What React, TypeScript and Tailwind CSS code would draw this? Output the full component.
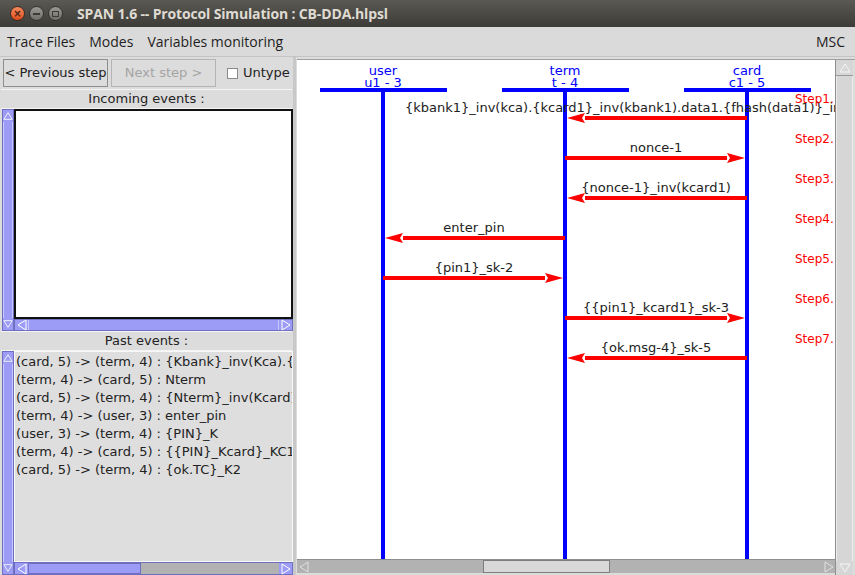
import React from 'react';

const MSGS = [
  { from: 747, to: 565, label: '{kbank1}_inv(kca).{kcard1}_inv(kbank1).data1.{fhash(data1)}_inv(kcard1)', start: 405 },
  { from: 565, to: 747, label: 'nonce-1' },
  { from: 747, to: 565, label: '{nonce-1}_inv(kcard1)' },
  { from: 565, to: 383, label: 'enter_pin' },
  { from: 383, to: 565, label: '{pin1}_sk-2' },
  { from: 565, to: 747, label: '{{pin1}_kcard1}_sk-3' },
  { from: 747, to: 565, label: '{ok.msg-4}_sk-5' },
];

const ACTORS = [
  { x: 383, name: 'user', id: 'u1 - 3' },
  { x: 565, name: 'term', id: 't - 4' },
  { x: 747, name: 'card', id: 'c1 - 5' },
];

const PAST = [
  '(card, 5) -> (term, 4) : {Kbank}_inv(Kca).{Kcard}_inv(Kbank)',
  '(term, 4) -> (card, 5) : Nterm',
  '(card, 5) -> (term, 4) : {Nterm}_inv(Kcard)',
  '(term, 4) -> (user, 3) : enter_pin',
  '(user, 3) -> (term, 4) : {PIN}_K',
  '(term, 4) -> (card, 5) : {{PIN}_Kcard}_KC1',
  '(card, 5) -> (term, 4) : {ok.TC}_K2',
];

// small outlined triangle used on scrollbar buttons
function Arrow({ dir, color = '#ffffff' }: { dir: 'up' | 'down' | 'left' | 'right'; color?: string }) {
  const pts = {
    up: '6,2 11,10 1,10',
    down: '1,2 11,2 6,10',
    left: '2,6 10,1 10,11',
    right: '10,6 2,1 2,11',
  }[dir];
  return (
    <svg width="12" height="12" viewBox="0 0 12 12">
      <polygon points={pts} fill="none" stroke={color} strokeWidth="1" />
    </svg>
  );
}

function PurpleVScroll() {
  return (
    <div className="w-[12px] flex flex-col bg-[#9c9cf6] border border-[#6f6fc0]">
      <div className="h-[12px] flex items-center justify-center"><Arrow dir="up" /></div>
      <div className="flex-1 border-x border-[#c8c8ff]" />
      <div className="h-[12px] flex items-center justify-center"><Arrow dir="down" /></div>
    </div>
  );
}

function MscCanvas() {
  return (
    <svg width="538" height="499" viewBox="297 60 538 499" className="block">
      <rect x="297" y="60" width="538" height="499" fill="#ffffff" />
      {ACTORS.map(a => (
        <g key={a.name}>
          <text x={a.x} y="75" textAnchor="middle" fill="#0000ff" fontSize="13" fontFamily="DejaVu Sans, sans-serif">{a.name}</text>
          <text x={a.x} y="87" textAnchor="middle" fill="#0000ff" fontSize="13" fontFamily="DejaVu Sans, sans-serif">{a.id}</text>
          <rect x={a.x - 63} y="88" width="127" height="4" fill="#0000ff" />
          <rect x={a.x - 2} y="92" width="4" height="470" fill="#0000ff" />
        </g>
      ))}
      {MSGS.map((m, i) => {
        const y = 118 + 40 * i;
        const dirLeft = m.to < m.from;
        const tip = dirLeft ? m.to + 2 : m.to - 2;
        const base = dirLeft ? tip + 18 : tip - 18;
        return (
          <g key={i}>
            <rect x={Math.min(m.from, base)} y={y - 2} width={Math.abs(m.from - base)} height="4" fill="#ff0000" />
            <polygon points={`${tip},${y} ${base},${y - 5} ${base + (dirLeft ? -3 : 3)},${y} ${base},${y + 5}`} fill="#ff0000" />
            {m.start ? (
              <text x={m.start} y={y - 6} fill="#222222" fontSize="13" fontFamily="DejaVu Sans, sans-serif">{m.label}</text>
            ) : (
              <text x={(m.from + m.to) / 2} y={y - 6} textAnchor="middle" fill="#222222" fontSize="13" fontFamily="DejaVu Sans, sans-serif">{m.label}</text>
            )}
            <text x="795" y={103 + 40 * i} fill="#ff0000" fontSize="12" fontFamily="DejaVu Sans, sans-serif">Step{i + 1}.</text>
          </g>
        );
      })}
    </svg>
  );
}

export default function App() {
  return (
    <div className="w-[855px] h-[575px] flex flex-col overflow-hidden bg-[#dcdcdc] font-['DejaVu_Sans',sans-serif]">
      {/* Title bar */}
      <div className="h-[27px] flex items-center bg-gradient-to-b from-[#5a5953] to-[#3c3b37]">
        <div className="flex items-center gap-[4px] ml-[10px]">
          <div className="w-[15px] h-[15px] rounded-full bg-gradient-to-b from-[#f58a5b] to-[#df4b16] border border-[#3a2a22] flex items-center justify-center text-[10px] leading-none font-bold text-[#3c2418]">×</div>
          <div className="w-[15px] h-[15px] rounded-full bg-gradient-to-b from-[#9a9993] to-[#6f6e69] border border-[#333] flex items-center justify-center">
            <div className="w-[7px] h-[2px] bg-[#3c3b37]" />
          </div>
          <div className="w-[15px] h-[15px] rounded-full bg-gradient-to-b from-[#9a9993] to-[#6f6e69] border border-[#333] flex items-center justify-center">
            <div className="w-[7px] h-[6px] border-[1.5px] border-[#3c3b37]" />
          </div>
        </div>
        <div className="ml-[14px] text-[14px] font-bold text-[#dfdbd2] font-['Open_Sans',sans-serif] tracking-[-0.15px]">
          SPAN 1.6 -- Protocol Simulation : CB-DDA.hlpsl
        </div>
      </div>

      {/* Menu bar */}
      <div className="h-[30px] flex items-center justify-between bg-[#dadada] border-b border-[#c4c4c4] text-[14px] text-[#1e1e1e] font-['Open_Sans',sans-serif]">
        <div className="flex gap-[14px] pl-[7px]">
          <span>Trace Files</span>
          <span>Modes</span>
          <span>Variables monitoring</span>
        </div>
        <span className="pr-[10px]">MSC</span>
      </div>

      <div className="flex-1 flex min-h-0">
        {/* Left panel */}
        <div className="w-[293px] flex flex-col text-[13px] text-[#222]">
          <div className="h-[32px] flex items-center pl-[3px] gap-[3px]">
            <div className="w-[105px] h-[28px] border border-[#8e8e8e] bg-[#dcdcdc] flex items-center justify-center">&lt; Previous step</div>
            <div className="w-[105px] h-[28px] border border-[#b4b4b4] bg-[#dcdcdc] flex items-center justify-center text-[#a5a5a5]">Next step &gt;</div>
            <div className="flex items-center ml-[8px] gap-[5px]">
              <div className="w-[11px] h-[11px] bg-white border border-[#8a8a8a]" />
              <span>Untype</span>
            </div>
          </div>
          <div className="h-[20px] flex items-center justify-center border-y border-[#f4f4f4] mx-[1px]">Incoming events :</div>
          <div className="h-[222px] flex pl-[2px]">
            <PurpleVScroll />
            <div className="flex-1 flex flex-col">
              <div className="flex-1 bg-white border-2 border-[#111]" />
              <div className="h-[12px] flex bg-[#9c9cf6] border border-[#6f6fc0]">
                <div className="w-[13px] flex items-center justify-center"><Arrow dir="left" /></div>
                <div className="flex-1 border-x border-[#c8c8ff]" />
                <div className="w-[13px] flex items-center justify-center"><Arrow dir="right" /></div>
              </div>
            </div>
          </div>
          <div className="h-[20px] flex items-center justify-center border-y border-[#f4f4f4] mx-[1px]">Past events :</div>
          <div className="flex-1 flex pl-[2px] min-h-0">
            <PurpleVScroll />
            <div className="flex-1 flex flex-col min-w-0">
              <div className="flex-1 bg-[#dedede] border border-[#f8f8f8] overflow-hidden pt-[1px] pl-[1px]">
                {PAST.map(p => (
                  <div key={p} className="h-[18px] leading-[18px] whitespace-nowrap">{p}</div>
                ))}
              </div>
              <div className="h-[13px] flex bg-[#b2b2b2] border border-[#6f6fc0]">
                <div className="w-[13px] flex items-center justify-center bg-[#9c9cf6]"><Arrow dir="left" /></div>
                <div className="w-[113px] bg-[#9c9cf6] border border-[#6f6fc0]" />
                <div className="flex-1" />
                <div className="w-[13px] flex items-center justify-center bg-[#9c9cf6]"><Arrow dir="right" /></div>
              </div>
            </div>
          </div>
        </div>

        {/* Right panel: MSC */}
        <div className="flex-1 flex flex-col border-l-[3px] border-[#c8c8c8] pl-[1px] pt-[2px]">
          <div className="flex-1 flex min-h-0 border-t border-[#a0a0a0]">
            <div className="flex flex-col">
              <MscCanvas />
              <div className="h-[14px] flex bg-[#b2b2b2] border-t border-[#8e8e8e]">
                <div className="w-[13px] flex items-center justify-center"><Arrow dir="left" color="#e0e0e0" /></div>
                <div className="w-[173px]" />
                <div className="w-[127px] bg-[#d8d8d8] border border-[#7e7e7e]" />
                <div className="flex-1" />
                <div className="w-[13px] flex items-center justify-center"><Arrow dir="right" color="#e0e0e0" /></div>
              </div>
            </div>
            <div className="w-[18px] flex flex-col bg-[#d6d6d6] border-l border-[#8e8e8e]">
              <div className="h-[16px] flex items-center justify-center border-b border-[#9a9a9a]"><Arrow dir="up" color="#f4f4f4" /></div>
              <div className="flex-1 border-x border-[#ececec]" />
              <div className="h-[14px] flex items-center justify-center"><Arrow dir="down" color="#f4f4f4" /></div>
            </div>
          </div>
        </div>
      </div>
    </div>
  );
}
